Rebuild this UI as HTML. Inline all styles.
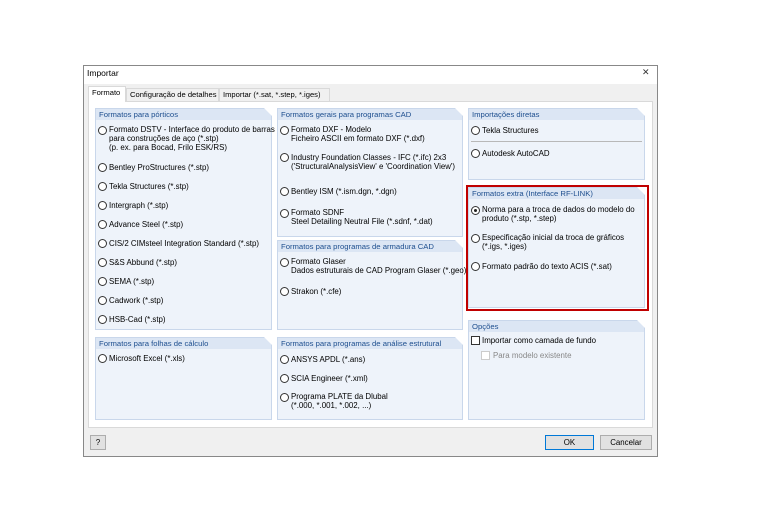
<!DOCTYPE html>
<html><head><meta charset="utf-8"><style>
*{margin:0;padding:0;box-sizing:border-box}
body{width:760px;height:518px;background:#fff;position:relative;font-family:"Liberation Sans",sans-serif;font-size:7.9px;color:#000;overflow:hidden}
.a{position:absolute;white-space:nowrap;line-height:9px}
.dlg{position:absolute;left:83px;top:65px;width:575px;height:392px;background:#f0f0f0;border:1px solid #888}
.tb{position:absolute;left:84px;top:66px;width:573px;height:18px;background:#fff}
.panel{position:absolute;left:88px;top:101px;width:565px;height:327px;background:#fff;border:1px solid #d9d9d9}
.g{position:absolute;background:#eef3fa;border:1px solid #c9d7eb}
.gh{position:absolute;left:0;top:0;right:0;height:11px;background:#dce6f4;color:#1e4f8f;padding-left:3px;line-height:11px;font-size:7.7px;white-space:nowrap}
.gh:after{content:"";position:absolute;right:-1px;top:-1px;border-style:solid;border-width:0 8px 8px 0;border-color:transparent #fff transparent transparent}
.r{position:absolute;width:9px;height:9px;border:1px solid #333;border-radius:50%;background:#fff}
.r.on:after{content:"";position:absolute;left:2px;top:2px;width:3px;height:3px;border-radius:50%;background:#222}
.cb{position:absolute;width:9px;height:9px;border:1px solid #333;background:#fff}
.btn{position:absolute;height:15px;background:#e1e1e1;border:1px solid #adadad;text-align:center;line-height:13px}
.tab{position:absolute;top:88px;height:13px;border:1px solid #d9d9d9;border-bottom:none;background:#f0f0f0;line-height:12px;padding-left:3px;white-space:nowrap;font-size:7.6px;overflow:hidden}
</style></head><body>
<div class="dlg"></div>
<div class="tb"></div>
<div class="a" style="left:87px;top:69px;font-size:8.5px">Importar</div>
<div class="a" style="left:642px;top:68px;font-size:9px;color:#333">✕</div>
<div class="panel"></div>
<div class="tab" style="left:88px;top:86px;height:16px;width:38px;background:#fff;z-index:2">Formato</div>
<div class="tab" style="left:126px;width:93px">Configuração de detalhes</div>
<div class="tab" style="left:219px;width:111px">Importar (*.sat, *.step, *.iges)</div>

<!-- col1 -->
<div class="g" style="left:95px;top:108px;width:177px;height:222px"><div class="gh">Formatos para pórticos</div></div>
<div class="r" style="left:98px;top:126px"></div><div class="a" style="left:109px;top:125px">Formato DSTV - Interface do produto de barras<br>para construções de aço (*.stp)<br>(p. ex. para Bocad, Frilo ESK/RS)</div>
<div class="r" style="left:98px;top:163px"></div><div class="a" style="left:109px;top:163px">Bentley ProStructures (*.stp)</div>
<div class="r" style="left:98px;top:182px"></div><div class="a" style="left:109px;top:182px">Tekla Structures (*.stp)</div>
<div class="r" style="left:98px;top:201px"></div><div class="a" style="left:109px;top:201px">Intergraph (*.stp)</div>
<div class="r" style="left:98px;top:220px"></div><div class="a" style="left:109px;top:220px">Advance Steel (*.stp)</div>
<div class="r" style="left:98px;top:239px"></div><div class="a" style="left:109px;top:239px">CIS/2 CIMsteel Integration Standard (*.stp)</div>
<div class="r" style="left:98px;top:258px"></div><div class="a" style="left:109px;top:258px">S&amp;S Abbund (*.stp)</div>
<div class="r" style="left:98px;top:277px"></div><div class="a" style="left:109px;top:277px">SEMA (*.stp)</div>
<div class="r" style="left:98px;top:296px"></div><div class="a" style="left:109px;top:296px">Cadwork (*.stp)</div>
<div class="r" style="left:98px;top:315px"></div><div class="a" style="left:109px;top:315px">HSB-Cad (*.stp)</div>

<div class="g" style="left:95px;top:337px;width:177px;height:83px"><div class="gh">Formatos para folhas de cálculo</div></div>
<div class="r" style="left:98px;top:354px"></div><div class="a" style="left:109px;top:354px">Microsoft Excel (*.xls)</div>

<!-- col2 -->
<div class="g" style="left:277px;top:108px;width:186px;height:129px"><div class="gh">Formatos gerais para programas CAD</div></div>
<div class="r" style="left:280px;top:126px"></div><div class="a" style="left:291px;top:125px">Formato DXF - Modelo<br>Ficheiro ASCII em formato DXF (*.dxf)</div>
<div class="r" style="left:280px;top:153px"></div><div class="a" style="left:291px;top:153px">Industry Foundation Classes - IFC (*.ifc) 2x3<br>('StructuralAnalysisView' e 'Coordination View')</div>
<div class="r" style="left:280px;top:187px"></div><div class="a" style="left:291px;top:187px">Bentley ISM (*.ism.dgn, *.dgn)</div>
<div class="r" style="left:280px;top:209px"></div><div class="a" style="left:291px;top:208px">Formato SDNF<br>Steel Detailing Neutral File (*.sdnf, *.dat)</div>

<div class="g" style="left:277px;top:240px;width:186px;height:90px"><div class="gh">Formatos para programas de armadura CAD</div></div>
<div class="r" style="left:280px;top:258px"></div><div class="a" style="left:291px;top:257px">Formato Glaser<br>Dados estruturais de CAD Program Glaser (*.geo)</div>
<div class="r" style="left:280px;top:287px"></div><div class="a" style="left:291px;top:287px">Strakon (*.cfe)</div>

<div class="g" style="left:277px;top:337px;width:186px;height:83px"><div class="gh">Formatos para programas de análise estrutural</div></div>
<div class="r" style="left:280px;top:355px"></div><div class="a" style="left:291px;top:355px">ANSYS APDL (*.ans)</div>
<div class="r" style="left:280px;top:374px"></div><div class="a" style="left:291px;top:374px">SCIA Engineer (*.xml)</div>
<div class="r" style="left:280px;top:393px"></div><div class="a" style="left:291px;top:392px">Programa PLATE da Dlubal<br>(*.000, *.001, *.002, ...)</div>

<!-- col3 -->
<div class="g" style="left:468px;top:108px;width:177px;height:72px"><div class="gh">Importações diretas</div></div>
<div class="r" style="left:471px;top:126px"></div><div class="a" style="left:482px;top:126px">Tekla Structures</div>
<div class="a" style="left:471px;top:141px;width:171px;height:1px;background:#b8b8b8"></div>
<div class="r" style="left:471px;top:149px"></div><div class="a" style="left:482px;top:149px">Autodesk AutoCAD</div>

<div class="g" style="left:468px;top:187px;width:177px;height:121px"><div class="gh">Formatos extra (Interface RF-LINK)</div></div>
<div class="a" style="left:466px;top:185px;width:183px;height:126px;border:2px solid #c00000"></div>
<div class="r on" style="left:471px;top:206px"></div><div class="a" style="left:482px;top:205px">Norma para a troca de dados do modelo do<br>produto (*.stp, *.step)</div>
<div class="r" style="left:471px;top:234px"></div><div class="a" style="left:482px;top:233px">Especificação inicial da troca de gráficos<br>(*.igs, *.iges)</div>
<div class="r" style="left:471px;top:262px"></div><div class="a" style="left:482px;top:262px">Formato padrão do texto ACIS (*.sat)</div>

<div class="g" style="left:468px;top:320px;width:177px;height:100px"><div class="gh">Opções</div></div>
<div class="cb" style="left:471px;top:336px"></div><div class="a" style="left:482px;top:336px">Importar como camada de fundo</div>
<div class="cb" style="left:481px;top:351px;border-color:#ccc"></div><div class="a" style="left:493px;top:351px;color:#888">Para modelo existente</div>

<!-- footer -->
<div class="btn" style="left:90px;top:435px;width:16px;font-size:8px">?</div>
<div class="btn" style="left:545px;top:435px;width:49px;border-color:#0078d7">OK</div>
<div class="btn" style="left:600px;top:435px;width:52px">Cancelar</div>
</body></html>
